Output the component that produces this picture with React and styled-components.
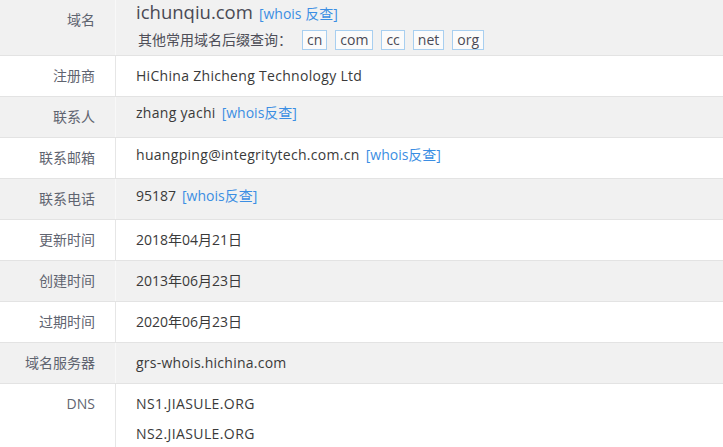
import React from "react";
import styled, { createGlobalStyle } from "styled-components";

const Global = createGlobalStyle`
  html, body { margin: 0; padding: 0; background: #fff; }
  body { font-family: "Open Sans", "Noto Sans CJK SC", sans-serif; font-size: 14px; color: #333; }
`;

const Table = styled.div`
  width: 723px;
  display: flex;
  flex-direction: column;
`;

const Row = styled.div`
  display: grid;
  grid-template-columns: 116px 1fr;
  min-height: ${(p) => p.$h || 40}px;
  background: ${(p) => (p.$gray ? "#f1f1f1" : "#fff")};
  border-bottom: 1px solid #e3e3e3;
`;

const Label = styled.div`
  border-right: 1px solid ${(p) => (p.$gray ? "#f8f8f8" : "#e6e6e6")};
  text-align: right;
  padding: ${(p) => p.$pt ?? 10}px 20px 0 0;
  line-height: 20px;
  color: #5f6470;
  font-size: 14px;
`;

const Value = styled.div`
  padding: ${(p) => p.$pt ?? 10}px 0 0 20px;
  line-height: 20px;
  color: #3a3a3a;
  font-size: 14px;
`;

const Text = styled.span`
  letter-spacing: ${(p) => p.$ls ?? 0.3}px;
`;

const Domain = styled.div`
  display: flex;
  align-items: baseline;
  gap: 6px;
  line-height: 24px;
`;

const DomainName = styled.span`
  font-size: 18.5px;
  color: #4a4a55;
`;

const Link = styled.a`
  color: #3b8ee3;
  text-decoration: none;
  margin-left: ${(p) => p.$ml ?? 6}px;
  font-size: 14px;
  letter-spacing: 0;
`;

const Suffixes = styled.div`
  display: flex;
  align-items: center;
  margin-top: 4px;
  margin-left: 2px;
  color: #4e4e58;
  font-size: 14px;
`;

const SuffixLabel = styled.span`
  margin-right: 10px;
`;

const Suffix = styled.span`
  display: inline-flex;
  align-items: center;
  height: 18px;
  padding: 0 4px;
  border: 1px solid #a8cff0;
  background: #fbfbfb;
  margin-right: 8px;
  color: #4a4a55;
  font-size: 14px;
`;

const DnsLine = styled.div`
  line-height: 30px;
  letter-spacing: 0.4px;
`;

export default function App() {
  return (
    <>
      <Global />
      <Table>
        <Row $gray $h={55}>
          <Label $gray $pt={10}>域名</Label>
          <Value $pt={0}>
            <Domain>
              <DomainName>ichunqiu.com</DomainName>
              <Link $ml={0}>[whois 反查]</Link>
            </Domain>
            <Suffixes>
              <SuffixLabel>其他常用域名后缀查询：</SuffixLabel>
              <Suffix>cn</Suffix>
              <Suffix>com</Suffix>
              <Suffix>cc</Suffix>
              <Suffix>net</Suffix>
              <Suffix>org</Suffix>
            </Suffixes>
          </Value>
        </Row>
        <Row>
          <Label>注册商</Label>
          <Value><Text>HiChina Zhicheng Technology Ltd</Text></Value>
        </Row>
        <Row $gray>
          <Label $gray>联系人</Label>
          <Value $pt={6}><Text>zhang yachi</Text><Link>[whois反查]</Link></Value>
        </Row>
        <Row>
          <Label>联系邮箱</Label>
          <Value $pt={7}><Text>huangping@integritytech.com.cn</Text><Link>[whois反查]</Link></Value>
        </Row>
        <Row $gray>
          <Label $gray>联系电话</Label>
          <Value $pt={7}><Text $ls={0}>95187</Text><Link>[whois反查]</Link></Value>
        </Row>
        <Row>
          <Label>更新时间</Label>
          <Value>2018年04月21日</Value>
        </Row>
        <Row $gray>
          <Label $gray>创建时间</Label>
          <Value>2013年06月23日</Value>
        </Row>
        <Row>
          <Label>过期时间</Label>
          <Value>2020年06月23日</Value>
        </Row>
        <Row $gray>
          <Label $gray>域名服务器</Label>
          <Value><Text $ls={0.25}>grs-whois.hichina.com</Text></Value>
        </Row>
        <Row $h={70}>
          <Label>DNS</Label>
          <Value $pt={5}>
            <DnsLine>NS1.JIASULE.ORG</DnsLine>
            <DnsLine>NS2.JIASULE.ORG</DnsLine>
          </Value>
        </Row>
      </Table>
    </>
  );
}
